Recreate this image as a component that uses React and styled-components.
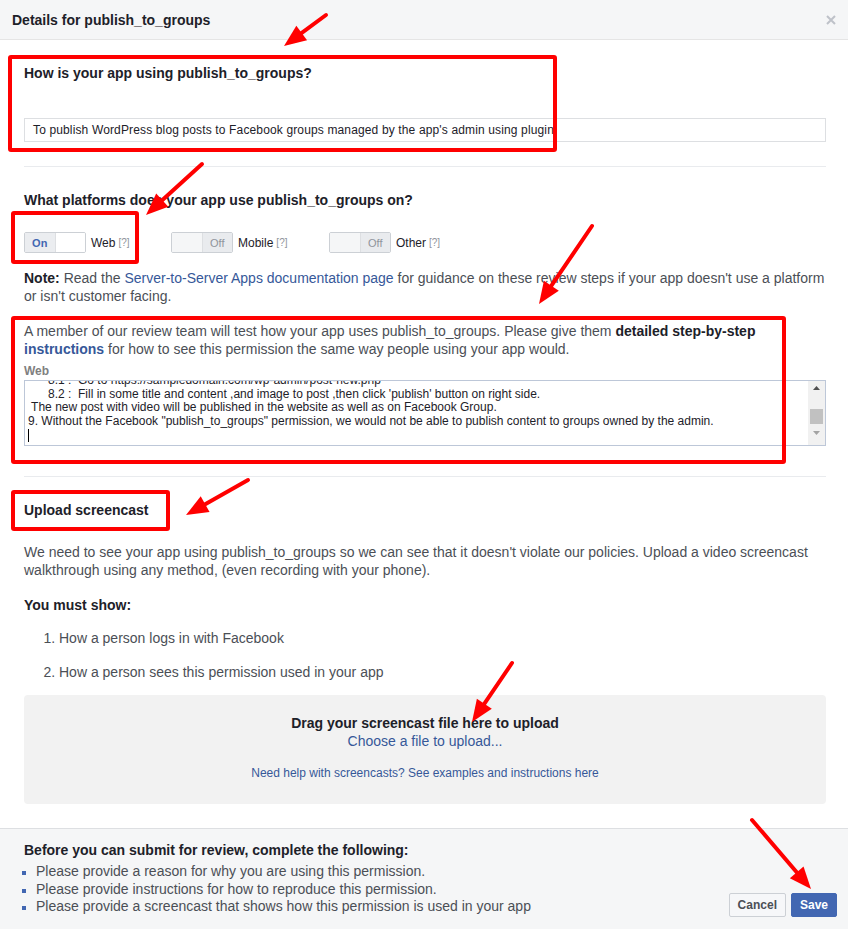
import React from 'react';
import styled, { createGlobalStyle } from 'styled-components';

const GlobalStyle = createGlobalStyle`
  html, body {
    margin: 0;
    padding: 0;
    background: #fff;
  }
  body {
    font-family: "Liberation Sans", Arial, Helvetica, sans-serif;
    color: #1d2129;
  }
`;

const platforms = [
  { name: 'Web', on: true },
  { name: 'Mobile', on: false },
  { name: 'Other', on: false },
];

const textLines = [
  '      8.1 :  Go to https://sampledomain.com/wp-admin/post-new.php',
  '      8.2 :  Fill in some title and content ,and image to post ,then click \'publish\' button on right side.',
  ' The new post with video will be published in the website as well as on Facebook Group.',
  '9. Without the Facebook "publish_to_groups" permission, we would not be able to publish content to groups owned by the admin.',
];

const todo = [
  'Please provide a reason for why you are using this permission.',
  'Please provide instructions for how to reproduce this permission.',
  'Please provide a screencast that shows how this permission is used in your app',
];

// red annotations drawn over the screenshot
const boxes = [
  [8, 55, 557, 152],
  [11, 211, 139, 264],
  [11, 316, 786, 464],
  [11, 490, 170, 531],
];

const arrows = [
  [326, 15, 284, 46],
  [202, 164, 146, 215],
  [592, 226, 539, 304],
  [248, 480, 186, 515],
  [512, 663, 472, 722],
  [752, 820, 811, 889],
];

const arrowHead = (x1, y1, x2, y2) => {
  const len = Math.hypot(x2 - x1, y2 - y1);
  const ux = (x2 - x1) / len;
  const uy = (y2 - y1) / len;
  const bx = x2 - ux * 22;
  const by = y2 - uy * 22;
  const px = -uy * 9;
  const py = ux * 9;
  return {
    line: [x1, y1, bx + ux * 2, by + uy * 2],
    points: `${x2},${y2} ${bx + px},${by + py} ${bx - px},${by - py}`,
  };
};

const Annotations = () => (
  <Overlay width="848" height="929" viewBox="0 0 848 929">
    {boxes.map(([x1, y1, x2, y2], i) => (
      <rect key={i} x={x1 + 2} y={y1 + 2} width={x2 - x1 - 4} height={y2 - y1 - 4}
        fill="none" stroke="#ff0000" strokeWidth="4" rx="1" />
    ))}
    {arrows.map(([x1, y1, x2, y2], i) => {
      const a = arrowHead(x1, y1, x2, y2);
      return (
        <g key={i}>
          <line x1={a.line[0]} y1={a.line[1]} x2={a.line[2]} y2={a.line[3]}
            stroke="#ff0000" strokeWidth="4" strokeLinecap="round" />
          <polygon points={a.points} fill="#ff0000" />
        </g>
      );
    })}
  </Overlay>
);

const App = () => {
  return (
    <Dialog>
      <GlobalStyle />
      <Header>
        <Title>Details for publish_to_groups</Title>
        <Close width="10" height="10" viewBox="0 0 10 10">
          <path d="M1 1 L9 9 M9 1 L1 9" stroke="#bec2c9" strokeWidth="2" />
        </Close>
      </Header>

      <Body>
        <Section>
          <Heading>How is your app using publish_to_groups?</Heading>
          <Input>To publish WordPress blog posts to Facebook groups managed by the app's admin using plugin</Input>
        </Section>

        <Section>
          <Heading>What platforms does your app use publish_to_groups on?</Heading>
          <Platforms>
            {platforms.map((p) => (
              <Platform key={p.name}>
                <Toggle>
                  <ToggleHalf $on={p.on} $side="left">{p.on ? 'On' : ''}</ToggleHalf>
                  <ToggleHalf $on={p.on} $side="right">{p.on ? '' : 'Off'}</ToggleHalf>
                </Toggle>
                <PlatformName>{p.name}</PlatformName>
                <Help>[?]</Help>
              </Platform>
            ))}
          </Platforms>
          <Paragraph>
            <b>Note:</b> Read the <Link>Server-to-Server Apps documentation page</Link> for guidance on these review steps if your app doesn't use a platform or isn't customer facing.
          </Paragraph>
          <Paragraph $top={17}>
            A member of our review team will test how your app uses publish_to_groups. Please give them <b>detailed step-by-step</b> <Link><b>instructions</b></Link> for how to see this permission the same way people using your app would.
          </Paragraph>
          <FieldLabel>Web</FieldLabel>
          <TextArea>
            <TextScroll>
              <TextLines>
                {textLines.map((l, i) => <TextLine key={i}>{l}</TextLine>)}
                <TextLine><Caret /></TextLine>
              </TextLines>
            </TextScroll>
            <Scrollbar>
              <ScrollArrow viewBox="0 0 7 4" width="7" height="4">
                <path d="M0 4 L3.5 0 L7 4 Z" fill="#505050" />
              </ScrollArrow>
              <Thumb />
              <ScrollArrow viewBox="0 0 7 4" width="7" height="4">
                <path d="M0 0 L3.5 4 L7 0 Z" fill="#a3a3a3" />
              </ScrollArrow>
            </Scrollbar>
          </TextArea>
        </Section>

        <Section $last>
          <Heading>Upload screencast</Heading>
          <Paragraph $top={24}>
            We need to see your app using publish_to_groups so we can see that it doesn't violate our policies. Upload a video screencast walkthrough using any method, (even recording with your phone).
          </Paragraph>
          <Heading $top={17}>You must show:</Heading>
          <Steps>
            <li>How a person logs in with Facebook</li>
            <li>How a person sees this permission used in your app</li>
          </Steps>
          <DropZone>
            <DropTitle>Drag your screencast file here to upload</DropTitle>
            <ChooseLink>Choose a file to upload...</ChooseLink>
            <SmallLink>Need help with screencasts? See examples and instructions here</SmallLink>
          </DropZone>
        </Section>
      </Body>

      <Footer>
        <Requirements>
          <FooterTitle>Before you can submit for review, complete the following:</FooterTitle>
          <Bullets>
            {todo.map((t) => <li key={t}>{t}</li>)}
          </Bullets>
        </Requirements>
        <Buttons>
          <Button>Cancel</Button>
          <Button $primary>Save</Button>
        </Buttons>
      </Footer>

      <Annotations />
    </Dialog>
  );
};

export default App;

const Dialog = styled.div`
  position: relative;
  width: 848px;
  height: 929px;
  display: flex;
  flex-direction: column;
  background: #fff;
  overflow: hidden;
`;

const Header = styled.div`
  height: 39px;
  flex: none;
  display: flex;
  align-items: center;
  justify-content: space-between;
  padding: 0 12px;
  background: #f5f6f7;
  border-bottom: 1px solid #e5e5e5;
`;

const Title = styled.div`
  font-size: 14px;
  font-weight: bold;
  color: #1d2129;
`;

const Close = styled.svg`
  display: block;
`;

const Body = styled.div`
  flex: 1;
  padding: 0 22px 0 24px;
`;

const Section = styled.div`
  padding: 24px 0 ${(p) => (p.$last ? '0' : '24px')};
  border-bottom: ${(p) => (p.$last ? 'none' : '1px solid #e9ebee')};
  &:nth-child(2) {
    padding-bottom: 30px;
  }
`;

const Heading = styled.div`
  font-size: 14px;
  line-height: 18px;
  font-weight: bold;
  color: #1d2129;
  margin-top: ${(p) => p.$top || 0}px;
`;

const Input = styled.div`
  margin-top: 36px;
  height: 22px;
  border: 1px solid #dddfe2;
  padding: 0 8px;
  font-size: 12px;
  letter-spacing: 0.14px;
  line-height: 22px;
  color: #1d2129;
  white-space: nowrap;
`;

const Platforms = styled.div`
  display: flex;
  margin-top: 23px;
`;

const Platform = styled.div`
  display: flex;
  align-items: center;
  width: 147px;
  &:nth-child(2) {
    width: 158px;
  }
`;

const Toggle = styled.div`
  display: flex;
  width: 60px;
  height: 19px;
  border: 1px solid #ccd0d5;
  border-radius: 2px;
  overflow: hidden;
`;

const ToggleHalf = styled.div`
  flex: 1;
  display: flex;
  align-items: center;
  justify-content: center;
  font-size: 11px;
  padding-top: 1px;
  background: ${(p) =>
    p.$on
      ? p.$side === 'left' ? '#ebedf0' : '#ffffff'
      : p.$side === 'left' ? '#f5f6f7' : '#e9ebee'};
  color: ${(p) => (p.$on ? '#4267b2' : '#90949c')};
  font-weight: ${(p) => (p.$on ? 'bold' : 'normal')};
  border-left: ${(p) => (p.$side === 'right' ? '1px solid #dddfe2' : 'none')};
`;

const PlatformName = styled.span`
  font-size: 12px;
  color: #1d2129;
  margin-left: 5px;
`;

const Help = styled.span`
  font-size: 10px;
  color: #90949c;
  margin-left: 3px;
`;

const Paragraph = styled.p`
  margin: ${(p) => p.$top ?? 16}px 0 0;
  font-size: 14px;
  line-height: 18px;
  color: #4b4f56;
  b {
    color: #1d2129;
  }
`;

const Link = styled.a`
  color: #365899;
  cursor: pointer;
  b {
    color: #365899;
  }
`;

const ChooseLink = styled.a`
  color: #365899;
  font-size: 14px;
  line-height: 18px;
  cursor: pointer;
`;

const FieldLabel = styled.div`
  margin-top: 5px;
  font-size: 12px;
  line-height: 16px;
  font-weight: bold;
  color: #7f7f7f;
`;

const TextArea = styled.div`
  margin-top: 1px;
  height: 64px;
  border: 1px solid #bdc7d8;
  display: flex;
`;

const TextScroll = styled.div`
  flex: 1;
  overflow: hidden;
  padding: 0 3px;
`;

const TextLines = styled.div`
  margin-top: -7px;
`;

const TextLine = styled.div`
  font-family: "Liberation Sans", Arial, sans-serif;
  font-size: 12px;
  line-height: 13.5px;
  height: 13.5px;
  color: #1d2129;
  white-space: pre;
`;

const Caret = styled.span`
  display: inline-block;
  width: 1px;
  height: 13px;
  background: #000;
  margin-top: 1px;
`;

const Scrollbar = styled.div`
  width: 17px;
  background: #f1f1f1;
  display: flex;
  flex-direction: column;
  align-items: center;
  padding: 5px 0;
`;

const ScrollArrow = styled.svg`
  display: block;
  flex: none;
`;

const Thumb = styled.div`
  width: 13px;
  height: 15px;
  background: #c1c1c1;
  margin: 19px 0 7px;
`;

const Steps = styled.ol`
  margin: 15px 0 0;
  padding: 0 0 0 35px;
  font-size: 14px;
  line-height: 18px;
  color: #4b4f56;
  li + li {
    margin-top: 16px;
  }
`;

const DropZone = styled.div`
  margin-top: 14px;
  height: 109px;
  box-sizing: border-box;
  padding-top: 19px;
  background: #f2f2f2;
  border-radius: 4px;
  display: flex;
  flex-direction: column;
  align-items: center;
`;

const DropTitle = styled.div`
  font-size: 14px;
  line-height: 18px;
  font-weight: bold;
  color: #1d2129;
`;

const SmallLink = styled.a`
  margin-top: 15px;
  font-size: 12px;
  line-height: 16px;
  color: #365899;
  cursor: pointer;
`;

const Footer = styled.div`
  flex: none;
  height: 101px;
  box-sizing: border-box;
  border-top: 1px solid #dddfe2;
  background: #f5f6f7;
  padding: 12px 11px 12px 24px;
  display: flex;
  align-items: flex-end;
  justify-content: space-between;
`;

const Requirements = styled.div`
  align-self: stretch;
`;

const FooterTitle = styled.div`
  font-size: 14px;
  line-height: 18px;
  font-weight: bold;
  color: #1d2129;
`;

const Bullets = styled.ul`
  list-style: none;
  margin: 4px 0 0 -2px;
  padding: 0;
  li {
    position: relative;
    padding-left: 14px;
    font-size: 14px;
    line-height: 17.5px;
    color: #4b4f56;
  }
  li::before {
    content: '';
    position: absolute;
    left: 0;
    top: 8px;
    width: 4px;
    height: 4px;
    background: #4267b2;
  }
`;

const Buttons = styled.div`
  display: flex;
  gap: 5px;
`;

const Button = styled.button`
  height: 24px;
  padding: 0 8px;
  font-family: "Liberation Sans", Arial, sans-serif;
  font-size: 12px;
  font-weight: bold;
  border-radius: 2px;
  border: 1px solid ${(p) => (p.$primary ? '#4267b2' : '#ccd0d5')};
  background: ${(p) => (p.$primary ? '#4267b2' : '#f6f7f9')};
  color: ${(p) => (p.$primary ? '#fff' : '#4b4f56')};
  cursor: pointer;
`;

const Overlay = styled.svg`
  position: absolute;
  left: 0;
  top: 0;
  pointer-events: none;
`;
